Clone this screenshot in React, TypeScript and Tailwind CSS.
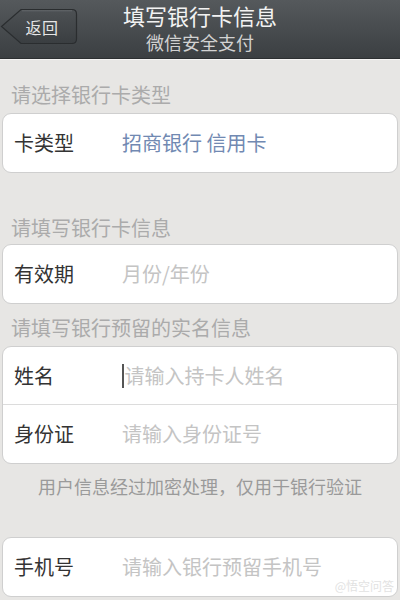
import React from "react";

// one field row inside a white card
function Row({ label, value, placeholder, cursor, divider }: { label: string; value?: string; placeholder?: string; cursor?: boolean; divider?: boolean }) {
  return (
    <div className={"flex items-center h-[58px] " + (divider ? "border-b border-[#dcdcdc]" : "")}>
      <div className="w-[119px] pl-[11px] text-[20px] text-[#333333]">{label}</div>
      <div className="flex items-center text-[20px]">
        {cursor && <span className="w-[1.5px] h-[24px] bg-[#555] mr-[1px]" />}
        {value ? (
          <span className="text-[#7189b2]">{value}</span>
        ) : (
          <span className="text-[#c4c4c4]">{placeholder}</span>
        )}
      </div>
    </div>
  );
}

function Card({ children, className = "" }: { children: React.ReactNode; className?: string }) {
  return (
    <div className={"mx-[2px] bg-white rounded-[9px] border border-[#cfcfcf] overflow-hidden " + className}>
      {children}
    </div>
  );
}

function SectionLabel({ text, className = "" }: { text: string; className?: string }) {
  return <div className={"pl-[11px] text-[20px] leading-[28px] text-[#ababab] " + className}>{text}</div>;
}

export default function App() {
  return (
    <div
      className="w-[400px] h-[600px] overflow-hidden bg-[#e7e6e4] relative"
      style={{ fontFamily: '"Noto Sans CJK SC", "Noto Sans", sans-serif' }}
    >
      {/* Header */}
      <div className="relative h-[59px] bg-gradient-to-b from-[#55595c] to-[#3b3f42] border-b border-[#2c2f31] flex flex-col items-center">
        <button className="absolute left-0 top-[8px] w-[78px] h-[37px] flex items-center justify-center">
          <svg className="absolute inset-0" width="78" height="37" viewBox="0 0 78 37">
            <defs>
              <linearGradient id="bb" x1="0" y1="0" x2="0" y2="1">
                <stop offset="0" stopColor="#4d5154" />
                <stop offset="1" stopColor="#3a3e41" />
              </linearGradient>
            </defs>
            <path
              d="M1.5 18.5 L21 1.5 H72 Q76.5 1.5 76.5 6 V31 Q76.5 35.5 72 35.5 H21 Z"
              fill="url(#bb)"
              stroke="#2a2d2f"
              strokeWidth="1.2"
            />
            <path d="M22 2.8 H72" stroke="#6a6e71" strokeWidth="0.8" />
          </svg>
          <span className="relative pl-[6px] text-[16px] text-[#e6e6e6] tracking-[0.5px]">返回</span>
        </button>
        <div className="mt-[3px] text-[22px] leading-[24px] text-[#f2f2f2]">填写银行卡信息</div>
        <div className="mt-[4px] text-[18px] leading-[22px] text-[#d2d2d2]">微信安全支付</div>
      </div>
      <div className="h-[1px] bg-[#f4f4f3]" />

      <SectionLabel text="请选择银行卡类型" className="pt-[21px] pb-[4px]" />
      <Card>
        <Row label="卡类型" value="招商银行 信用卡" />
      </Card>

      <SectionLabel text="请填写银行卡信息" className="pt-[41px] pb-[2px]" />
      <Card>
        <Row label="有效期" placeholder="月份/年份" />
      </Card>

      <SectionLabel text="请填写银行预留的实名信息" className="pt-[10px] pb-[4px]" />
      <Card>
        <Row label="姓名" placeholder="请输入持卡人姓名" cursor divider />
        <Row label="身份证" placeholder="请输入身份证号" />
      </Card>

      <div className="pt-[8px] text-center text-[18px] leading-[28px] text-[#9a9a9a]">用户信息经过加密处理，仅用于银行验证</div>

      <Card className="mt-[37px]">
        <Row label="手机号" placeholder="请输入银行预留手机号" />
      </Card>

      <div className="absolute right-[6px] bottom-[7px] text-[12px] leading-[14px] text-[#e2e2e2]">@悟空问答</div>
    </div>
  );
}
